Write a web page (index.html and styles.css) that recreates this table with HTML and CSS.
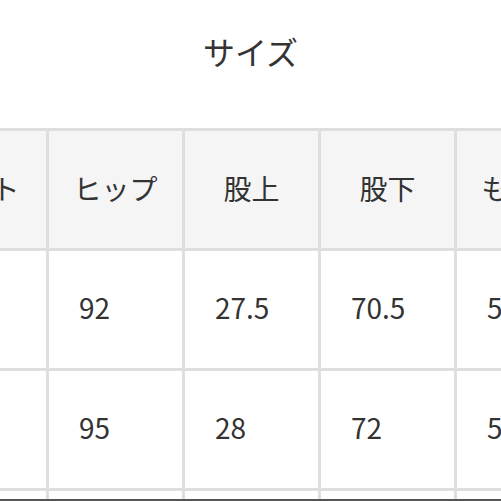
FILE: index.html
```html
<!DOCTYPE html>
<html lang="ja">
<head>
<meta charset="utf-8">
<title>サイズ</title>
<link rel="stylesheet" href="styles.css">
</head>
<body>
<h2 class="title">サイズ</h2>
<div class="size-table">
  <div class="cell head">ウエスト</div>
  <div class="cell head">ヒップ</div>
  <div class="cell head">股上</div>
  <div class="cell head">股下</div>
  <div class="cell head">もも幅</div>

  <div class="cell">76</div>
  <div class="cell">92</div>
  <div class="cell">27.5</div>
  <div class="cell">70.5</div>
  <div class="cell">56</div>

  <div class="cell">80</div>
  <div class="cell">95</div>
  <div class="cell">28</div>
  <div class="cell">72</div>
  <div class="cell">58</div>

  <div class="cell">84</div>
  <div class="cell">98</div>
  <div class="cell">28.5</div>
  <div class="cell">73</div>
  <div class="cell">60</div>
</div>
<div class="bottom-edge"></div>
</body>
</html>
```
FILE: styles.css
```css
html, body {
  margin: 0;
  padding: 0;
  overflow: hidden;
  background: #ffffff;
}

body {
  font-family: "Noto Sans CJK JP", "Noto Sans", sans-serif;
  color: #333333;
}

.title {
  margin: 0;
  padding: 27px 0 53px;
  font-size: 32px;
  line-height: 48px;
  font-weight: 400;
  text-align: center;
}

.size-table {
  display: grid;
  grid-template-columns: 165px repeat(4, 133px);
  grid-auto-rows: 117px;
  gap: 3px;
  padding-top: 3px;
  margin-left: -119px;
  width: max-content;
  background: #dedede;
}

.cell {
  background: #ffffff;
  font-size: 28px;
  font-weight: 400;
  line-height: 1;
  display: flex;
  align-items: center;
  padding-left: 30px;
  padding-bottom: 6px;
}

.cell.head {
  background: #f5f5f5;
  justify-content: center;
  padding-left: 0;
  padding-bottom: 4px;
}

.bottom-edge {
  position: fixed;
  left: 0;
  right: 0;
  bottom: 0;
  height: 2px;
  background: #555555;
}
```
